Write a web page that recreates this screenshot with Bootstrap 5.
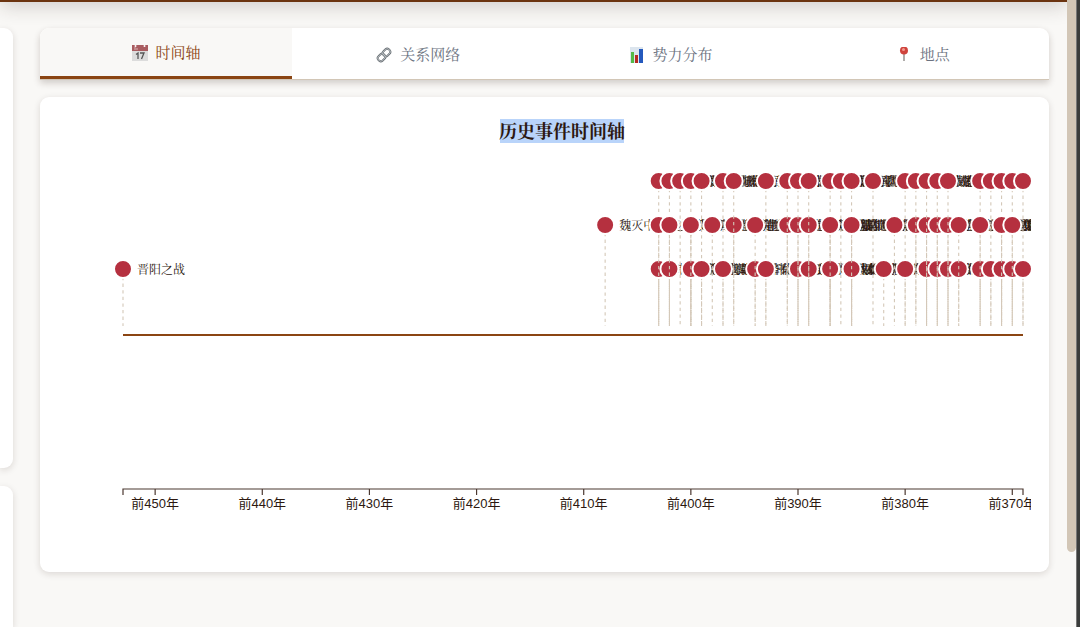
<!DOCTYPE html>
<html lang="zh-CN">
<head>
<meta charset="utf-8">
<meta name="viewport" content="width=device-width, initial-scale=1">
<title>历史事件时间轴</title>
<link href="https://cdn.jsdelivr.net/npm/bootstrap@5.3.0/dist/css/bootstrap.min.css" rel="stylesheet">
<style>
  :root { --paper: #f9f8f6; --brown: #8b4513; --sand: #d2c6b6; --ink: #2c1810; }
  body { background: var(--paper); color: var(--ink); font-family: "Liberation Serif", "Noto Serif CJK SC", "Noto Sans CJK SC", serif; }
  .page-top { height: 60px; margin-top: -58px; background: #6b3410; box-shadow: 0 4px 20px rgba(44, 30, 24, .2); }
  .panel { background: #fff; border-radius: 9px; box-shadow: 0 2px 7px rgba(44, 24, 16, .14); }
  .side { width: 13px; gap: 18px; }
  .side .panel { border-radius: 0 9px 9px 0; }
  .side-first { height: 440px; }
  .content-area { padding: 26px 18px 0 0; gap: 27px; }
  .main-col { gap: 17px; }
  .tab-bar { border-bottom: 1px solid var(--sand); border-radius: 9px 9px 0 0; overflow: hidden; flex-wrap: nowrap; box-shadow: 0 3px 7px rgba(44, 24, 16, .2); }
  .tab-bar .nav-link { width: 100%; height: 51px; padding: 2px 0 0; border: 0; border-radius: 0; background: transparent; color: #6b7280; font-size: 15px; line-height: 24px; gap: 8px; }
  .tab-bar .nav-link.active { background: var(--paper); color: var(--brown); border-bottom: 3px solid var(--brown); }
  .tab-bar svg { width: 16px; height: 16px; flex: none; }
  .chart-panel { padding: 18px; }
  .chart-panel svg { display: block; width: 100%; height: auto; overflow: hidden; }
  .chart-title { font-size: 18px; font-weight: 700; fill: var(--ink); text-anchor: middle; }
  .ev-label { font-size: 12px; fill: var(--ink); }
  .tick-label { font: 13px "Liberation Sans", "Noto Sans CJK SC", sans-serif; fill: var(--ink); text-anchor: middle; }
  .scroll-rail { width: 9px; }
  .scroll-thumb { height: 88%; background: var(--sand); border-radius: 0 0 5px 5px; }
  .window-edge { width: 4px; background: #3a3c3b; border-left: 1px solid #777; }
</style>
</head>
<body>
<div class="d-flex vh-100 overflow-hidden">
  <div class="d-flex flex-column flex-grow-1 overflow-hidden">
    <header class="page-top flex-shrink-0"></header>
    <div class="content-area d-flex flex-grow-1">
      <aside class="side d-flex flex-column flex-shrink-0">
        <div class="panel side-first flex-shrink-0"></div>
        <div class="panel flex-grow-1 rounded-bottom-0"></div>
      </aside>
      <main class="main-col d-flex flex-column flex-grow-1">
        <ul class="nav nav-fill tab-bar panel" role="tablist">
          <li class="nav-item col-3" role="presentation">
            <button class="nav-link active d-flex align-items-center justify-content-center" type="button" role="tab" aria-selected="true">
              <svg viewBox="0 0 16 16" aria-hidden="true"><path fill="#dcdcdc" d="M0 0h16v16H0z"/><path fill="#a95c60" d="M0 0h16v6H0z"/><path stroke="#d9b3b3" d="M3 2v3M5 3v2"/><circle cx="3.500" cy="1" r="1" fill="#fff"/><circle cx="12.500" cy="1" r="1" fill="#fff"/><path d="M4 9.500L6 8v6M8 8h4l-2.500 6" fill="none" stroke="#555" stroke-width="1.300"/></svg>
              <span>时间轴</span>
            </button>
          </li>
          <li class="nav-item col-3" role="presentation">
            <button class="nav-link d-flex align-items-center justify-content-center" type="button" role="tab" aria-selected="false">
              <svg viewBox="0 0 16 16" aria-hidden="true" fill="none"><g stroke="#656b70" stroke-width="2"><rect x="6.500" y="2.500" width="8" height="6" rx="3" transform="rotate(-42 10.500 5.500)"/><rect x="1.500" y="7.500" width="8" height="6" rx="3" transform="rotate(-42 5.500 10.500)"/></g><g stroke="#c3c8cc" stroke-width=".8"><rect x="6.500" y="2.500" width="8" height="6" rx="3" transform="rotate(-42 10.500 5.500)"/><rect x="1.500" y="7.500" width="8" height="6" rx="3" transform="rotate(-42 5.500 10.500)"/></g></svg>
              <span>关系网络</span>
            </button>
          </li>
          <li class="nav-item col-3" role="presentation">
            <button class="nav-link d-flex align-items-center justify-content-center" type="button" role="tab" aria-selected="false">
              <svg viewBox="0 0 16 16" aria-hidden="true"><path fill="#dce5ee" d="M1 0h13v16H1z"/><path fill="#54b947" d="M2 5h3v11H2z"/><path fill="#b52a24" d="M6 8h3v8H6z"/><path fill="#2459bd" d="M10 2h4v14h-4z"/></svg>
              <span>势力分布</span>
            </button>
          </li>
          <li class="nav-item col-3" role="presentation">
            <button class="nav-link d-flex align-items-center justify-content-center" type="button" role="tab" aria-selected="false">
              <svg viewBox="0 0 16 16" aria-hidden="true"><path stroke="#85807e" stroke-width="1.300" d="M8 7v7"/><circle cx="8" cy="3.500" r="4" fill="#cf433c"/><circle cx="7.500" cy="2.500" r="1.500" fill="#f09a90"/></svg>
              <span>地点</span>
            </button>
          </li>
        </ul>
        <section class="panel chart-panel">
          <svg id="timeline" viewBox="0 0 973 439" role="img" aria-label="历史事件时间轴">
            <rect x="442" y="4" width="124" height="24" fill="#b9d4fa"/>
            <text class="chart-title" x="504" y="23">历史事件时间轴</text>
            <path d="M65 220H965" stroke="#8b4513" stroke-width="2"/>
            <g id="events"></g>
            <g id="axis"></g>
          </svg>
        </section>
      </main>
    </div>
  </div>
  <div class="scroll-rail flex-shrink-0"><div class="scroll-thumb"></div></div>
  <div class="window-edge flex-shrink-0"></div>
</div>
<script src="https://cdn.jsdelivr.net/npm/bootstrap@5.3.0/dist/js/bootstrap.bundle.min.js"></script>
<script>
  // Years are BCE; consecutive events cycle through the three rows.
  const years = [453, 408, 403, 403, 403, 402, 402, 402, 401, 400, 400, 400, 400, 400, 399, 399, 398, 397, 397,
    396, 396, 394, 394, 393, 393, 391, 391, 390, 390, 390, 389, 389, 389, 387, 387, 387, 387, 387, 386,
    385, 385, 385, 385, 385, 383, 382, 381, 380, 380, 379, 379, 378, 378, 378, 377, 377, 377, 376, 376, 376,
    375, 375, 373, 373, 373, 372, 372, 371, 371, 371, 371, 370, 370, 370, 369, 369];
  const names = ['晋阳之战', '魏灭中山', '三家分晋', '韩侯受命', '赵侯受命', '魏伐郑国', '楚围郑国', '韩伐宋国',
    '聂政刺韩相', '魏筑酸枣城', '秦晋武城之战', '齐伐鲁取最', '赵国迁都邯郸', '楚国归榆关于郑', '秦伐韩宜阳',
    '吴起奔楚变法', '魏败秦军于注'];
  const rows = [154, 110, 66];
  const x = y => 65 + (453 - y) * 900 / 84;
  const NS = 'http://www.w3.org/2000/svg';
  function add(parent, tag, attrs, text) {
    const el = document.createElementNS(NS, tag);
    for (const k in attrs) el.setAttribute(k, attrs[k]);
    if (text) el.textContent = text;
    parent.appendChild(el);
  }
  const ev = document.getElementById('events'), axis = document.getElementById('axis');
  years.forEach((year, i) => {
    const cx = x(year), cy = rows[i % 3];
    const name = i < 8 ? names[i] : names[8 + i % 9];
    add(ev, 'path', { d: `M${cx} ${cy + 8}V211`, stroke: '#d4c8b8', 'stroke-width': 1.1, 'stroke-dasharray': '3.3 3.3' });
    add(ev, 'circle', { cx, cy, r: 9, fill: '#b5303f', stroke: '#fff', 'stroke-width': 2 });
    add(ev, 'text', { x: cx + 14, y: cy + 5, class: 'ev-label' }, name);
  });
  add(axis, 'path', { d: 'M65 380V374H965V380', fill: 'none', stroke: '#4b3830', 'stroke-width': 1.2 });
  for (let y = 450; y >= 370; y -= 10) {
    add(axis, 'path', { d: `M${x(y)} 374V380`, stroke: '#4b3830', 'stroke-width': 1.2 });
    add(axis, 'text', { x: x(y), y: 393, class: 'tick-label' }, `前${y}年`);
  }
</script>
</body>
</html>
